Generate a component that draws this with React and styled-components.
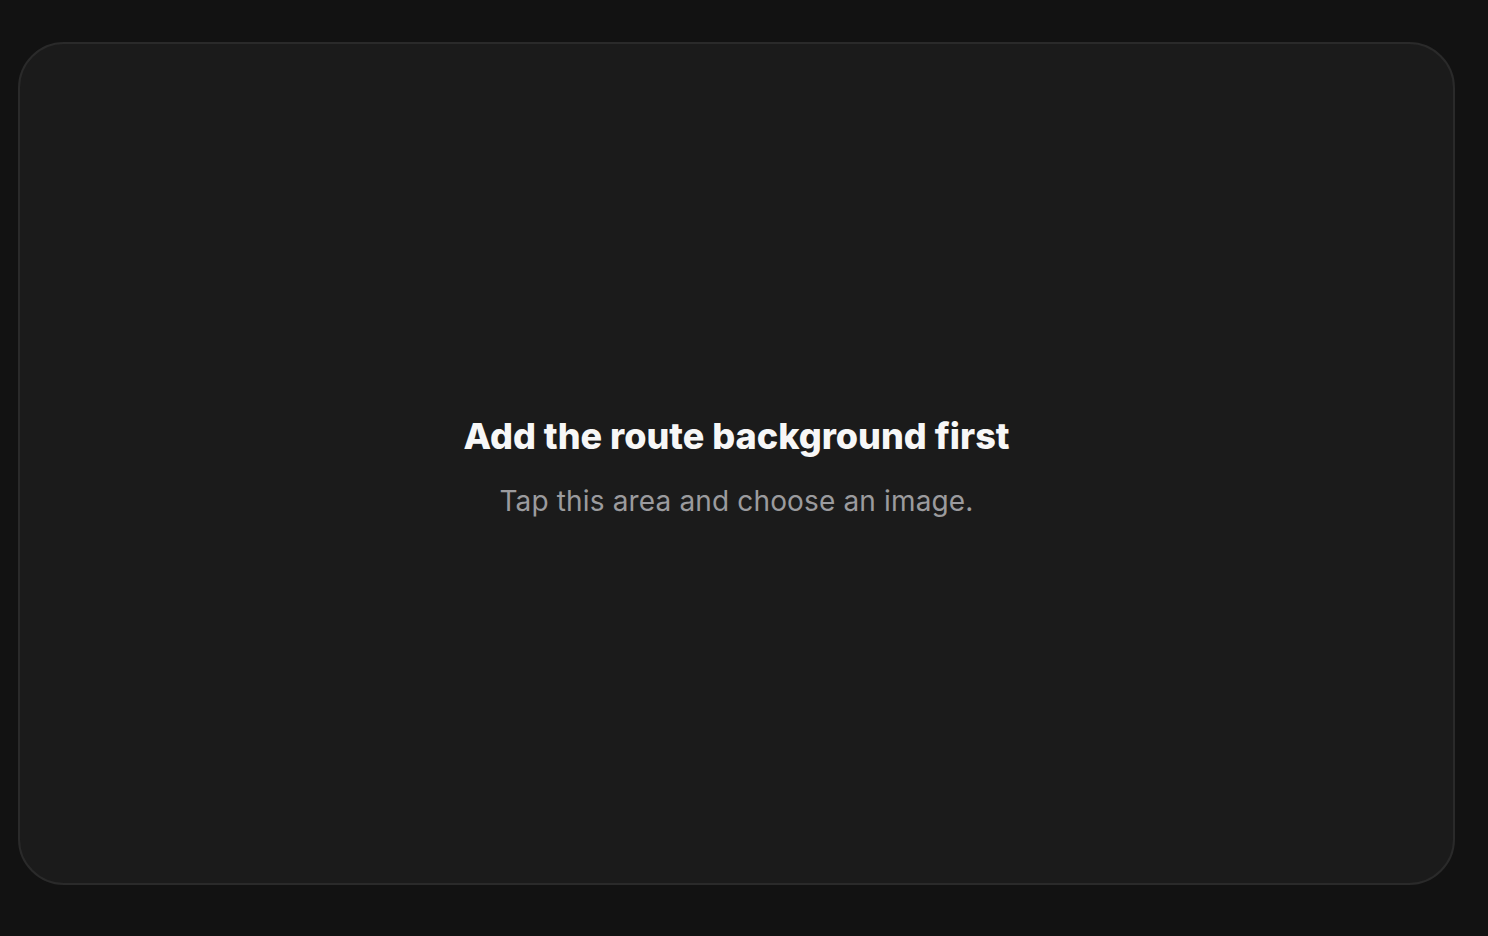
import React from "react";
import styled, { createGlobalStyle } from "styled-components";

const Global = createGlobalStyle`
  html, body { margin: 0; padding: 0; background: #121212; }
  body { font-family: Inter, "Noto Sans", sans-serif; }
  * { box-sizing: border-box; }
`;

const Page = styled.div`
  width: 1488px;
  height: 936px;
  padding: 42px 33px 51px 18px;
  background: #121212;
`;

const DropArea = styled.button`
  width: 100%;
  height: 100%;
  display: flex;
  flex-direction: column;
  align-items: center;
  justify-content: center;
  gap: 25px;
  background: #1b1b1b;
  border: 2px solid #2a2a2a;
  border-radius: 46px;
  cursor: pointer;
  font-family: inherit;
  padding: 7px 0 0;
`;

const Title = styled.h2`
  margin: 0;
  font-size: 36px;
  font-weight: 800;
  letter-spacing: 0;
  color: #f7f7f7;
  line-height: 1.2;
`;

const Subtitle = styled.p`
  margin: 0;
  font-size: 28px;
  font-weight: 400;
  letter-spacing: 0.15px;
  color: #9b9b9e;
  line-height: 1.3;
`;

export default function App() {
  return (
    <>
      <Global />
      <Page>
        <DropArea>
          <Title>Add the route background first</Title>
          <Subtitle>Tap this area and choose an image.</Subtitle>
        </DropArea>
      </Page>
    </>
  );
}
